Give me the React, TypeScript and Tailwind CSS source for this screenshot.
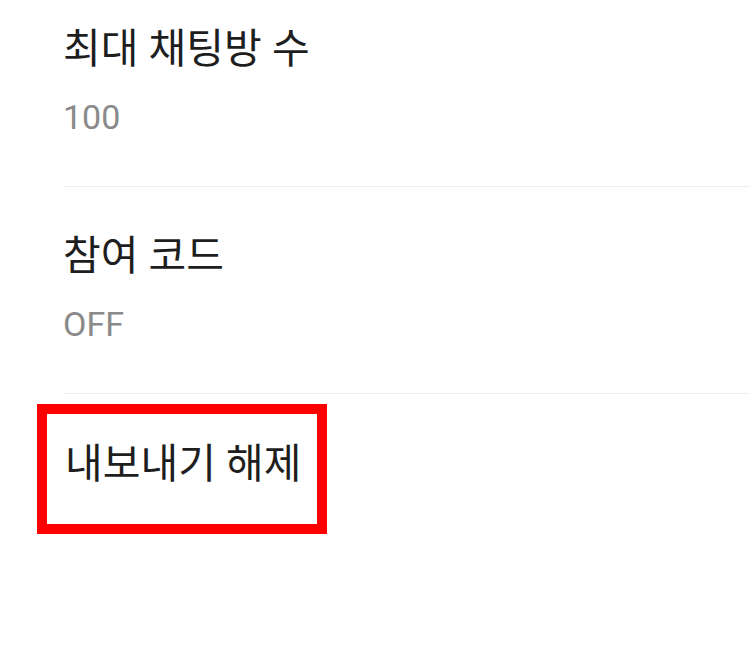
const font = "font-['Roboto','Noto_Sans_CJK_KR',sans-serif]";

interface SettingProps {
  title: string;
  value: string;
}

function SettingRow(props: SettingProps) {
  const { title, value } = props;
  return (
    <div className="pl-[63px]">
      <div className="pt-[41px] pb-[49px] border-b border-[#efefef]">
        <p className="text-[41px] leading-[56px] text-[#1e1e1e]">{title}</p>
        <p className="mt-[20px] text-[34px] leading-[40px] text-[#8a8a8a]">{value}</p>
      </div>
    </div>
  );
}

export default function App() {
  return (
    <div className={`w-[750px] h-[670px] overflow-hidden bg-white ${font}`}>
      <div className="-mt-[20px]">
        <SettingRow title="최대 채팅방 수" value="100" />
        <SettingRow title="참여 코드" value="OFF" />
      </div>
      <div className="ml-[37px] mt-[10px] w-[290px] h-[130px] border-[10px] border-[#ff0000] pl-[18px] pt-[22px]">
        <p className="text-[41px] leading-[56px] text-[#1e1e1e]">내보내기 해제</p>
      </div>
    </div>
  );
}
